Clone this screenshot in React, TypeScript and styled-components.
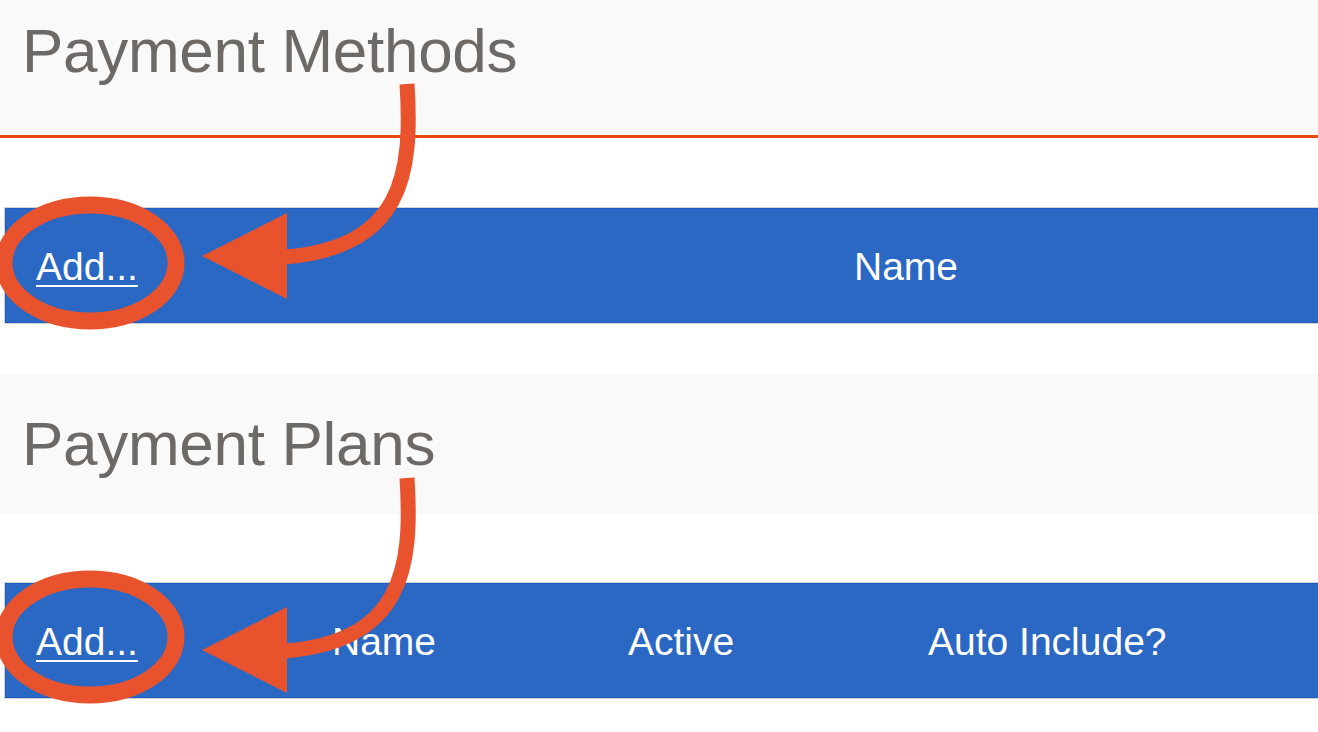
import React from 'react';
import styled, { createGlobalStyle } from 'styled-components';

const BLUE = '#2b68c4';
const BLUE_EDGE = '#1f5ec6';
const GREY_BG = '#f9f9f9';
const TITLE = '#6d6967';
const RULE = '#e8490f';
const MARK = '#e8532e';

const GlobalStyle = createGlobalStyle`
  html, body {
    margin: 0;
    padding: 0;
    background: #ffffff;
    overflow: hidden;
  }
  body {
    font-family: "Liberation Sans", Arial, sans-serif;
  }
`;

const Page = styled.div`
  position: relative;
  width: 1318px;
  height: 732px;
  overflow: hidden;
`;

type HeaderProps = {
  $top: number;
  $height: number;
  $gap?: number;
  $underline?: boolean;
};

const SectionHeader = styled.div<HeaderProps>`
  box-sizing: border-box;
  height: ${({ $height, $underline }) => $height + ($underline ? 3 : 0)}px;
  margin-top: ${({ $gap = 0 }) => $gap}px;
  padding: ${({ $top }) => $top}px 0 0 22px;
  background: ${GREY_BG};
  border-bottom: ${({ $underline }) => ($underline ? `3px solid ${RULE}` : 'none')};
`;

const Title = styled.h2`
  margin: 0;
  font-size: 62px;
  font-weight: 400;
  line-height: 71px;
  color: ${TITLE};
  letter-spacing: -0.3px;
`;

type BarProps = {
  $cols: string;
  $gap: number;
};

const HeadBar = styled.div<BarProps>`
  box-sizing: border-box;
  display: grid;
  grid-template-columns: ${({ $cols }) => $cols};
  align-items: center;
  width: 1506px;
  height: 115px;
  margin: ${({ $gap }) => $gap}px 0 0 5px;
  padding-top: 3px;
  background: ${BLUE};
  border: 1px solid ${BLUE_EDGE};
  outline: 1px solid #d2d2d2;
`;

type CellProps = {
  $center?: boolean;
};

const HeadCell = styled.div<CellProps>`
  padding-left: ${({ $center }) => ($center ? 0 : 30)}px;
  text-align: ${({ $center }) => ($center ? 'center' : 'left')};
  font-size: 39px;
  line-height: 46px;
  color: #ffffff;
  white-space: nowrap;
`;

const AddLink = styled.a`
  color: #ffffff;
  text-decoration: underline;
  text-decoration-thickness: 2px;
  text-underline-offset: 5px;
  cursor: pointer;
`;

const Marks = styled.svg`
  position: absolute;
  top: 0;
  left: 0;
  pointer-events: none;
`;

const Callout = ({ dy, ey }: { dy: number; ey: number }) => (
  <g fill="none" stroke={MARK}>
    <ellipse cx={90} cy={263 + ey} rx={86} ry={58} strokeWidth={17} />
    <path d={`M 407 ${84 + dy} C 413 ${175 + dy}, 402 ${248 + dy}, 284 ${257 + dy}`} strokeWidth={15} />
    <polygon
      points={`202,${256 + dy} 287,${213 + dy} 287,${299 + dy}`}
      fill={MARK}
      stroke="none"
    />
  </g>
);

export default function App() {
  return (
    <Page>
      <GlobalStyle />
      <SectionHeader $top={15} $height={135} $underline>
        <Title>Payment Methods</Title>
      </SectionHeader>
      <HeadBar $cols="296px 1fr" $gap={70}>
        <HeadCell>
          <AddLink>Add...</AddLink>
        </HeadCell>
        <HeadCell $center>Name</HeadCell>
      </HeadBar>

      <SectionHeader $top={34} $height={140} $gap={51}>
        <Title>Payment Plans</Title>
      </SectionHeader>
      <HeadBar $cols="296px 296px 300px 1fr" $gap={69}>
        <HeadCell>
          <AddLink>Add...</AddLink>
        </HeadCell>
        <HeadCell>Name</HeadCell>
        <HeadCell>Active</HeadCell>
        <HeadCell>Auto Include?</HeadCell>
      </HeadBar>

      <Marks width={1318} height={732} viewBox="0 0 1318 732">
        <Callout dy={0} ey={0} />
        <Callout dy={394} ey={374} />
      </Marks>
    </Page>
  );
}
